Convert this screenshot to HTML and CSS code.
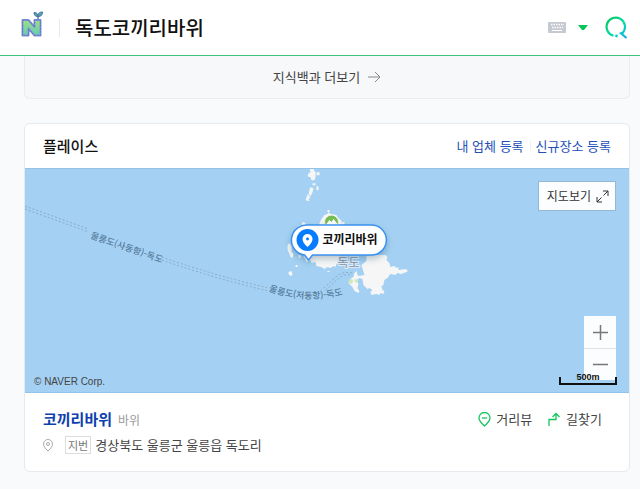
FILE: index.html
```html
<!DOCTYPE html>
<html lang="ko">
<head>
  <meta charset="UTF-8">
  <meta name="viewport" content="width=device-width, initial-scale=1.0">
  <title>독도코끼리바위 : 네이버 검색</title>
  <link rel="stylesheet" href="styles.css">
</head>
<body>
  <header class="search-header">
    <a class="logo" href="#" aria-label="NAVER">
      <svg width="24" height="28" viewBox="0 0 24 28">
        <defs>
          <linearGradient id="logo-fill" x1="0" y1="0" x2="0" y2="1">
            <stop offset="0" stop-color="#a0e07e"/>
            <stop offset="1" stop-color="#5fcdb8"/>
          </linearGradient>
        </defs>
        <path d="M2.500 10h6l6 7v-7h6v15.500h-6l-6-7v7h-6z" fill="url(#logo-fill)" stroke="#8497d6" stroke-width="2" stroke-linejoin="round"/>
        <path d="M2.500 10h6l6 7v-7h6v15.500h-6l-6-7v7h-6z" fill="none" stroke="#5f76bf" stroke-dasharray="2 1"/>
        <path d="M18 9V6" stroke="#7d9cc9" stroke-width="2"/>
        <path d="M18 6.500c-3 0-4-1.500-4-4 3 0 4 1.500 4 4zM18 6.500c0-3 1-4.500 4.500-4.500 0 3-1.500 4.500-4.500 4.500z" fill="#55a9a2" stroke="#4a6fb0"/>
      </svg>
    </a>
    <form class="search-form">
      <input class="search-input" type="text" value="독도코끼리바위" aria-label="검색어">
      <button class="icon-button" type="button" aria-label="한글 입력기">
        <svg width="18" height="11" viewBox="0 0 18 11">
          <rect width="18" height="11" rx="1" fill="#c5c9d0"/>
          <path d="M3 2.500h13M4 5.500h11" stroke="#fff" stroke-width="1.500" stroke-dasharray="1.500 1"/>
          <path d="M4 8.500h10" stroke="#fff"/>
        </svg>
      </button>
      <button class="icon-button" type="button" aria-label="자동완성">
        <svg width="10" height="6" viewBox="0 0 10 6"><path d="M0 0h10L6 5H4z" fill="#09c45b"/></svg>
      </button>
      <button class="icon-button" type="submit" aria-label="검색">
        <svg width="24" height="24" viewBox="0 0 24 24">
          <defs>
            <linearGradient id="search-stroke" x1="0" y1="0" x2="1" y2="1">
              <stop offset="0" stop-color="#04c65a"/>
              <stop offset=".55" stop-color="#05dda8"/>
              <stop offset="1" stop-color="#12a9f0"/>
            </linearGradient>
          </defs>
          <path d="M9.500 19.700A9.200 9.200 0 1 1 19 16.500L17 17.300L22.500 22" fill="none" stroke="url(#search-stroke)" stroke-width="2.200"/>
          <circle cx="12.500" cy="20" r="1.400" fill="#0ccbd0"/>
        </svg>
      </button>
    </form>
  </header>

  <main class="content">
    <section class="more-box">
      <a class="more-link" href="#">지식백과 더보기
        <svg width="13" height="12" viewBox="0 0 13 12"><path d="M0 6h12M7 1l5 5-5 5" fill="none" stroke="#888"/></svg>
      </a>
    </section>

    <section class="place">
      <div class="place-head">
        <h2>플레이스</h2>
        <nav class="place-links">
          <a href="#">내 업체 등록</a>
          <a href="#">신규장소 등록</a>
        </nav>
      </div>

      <div class="map">
        <svg class="map-canvas" viewBox="25 168 605 225" preserveAspectRatio="xMidYMid slice">
          <defs>
            <path id="route-west" d="M90 238L165 264"/>
            <path id="route-east" d="M269 291Q306 305 346 294"/>
            <filter id="bubble-shadow" x="-20%" y="-30%" width="140%" height="170%">
              <feDropShadow dx="0" dy="3" stdDeviation="3" flood-color="#24445f" flood-opacity=".3"/>
            </filter>
          </defs>
          <rect x="-1000" y="168" width="2600" height="225" fill="#a4d1f3"/>

          <!-- islets -->
          <g fill="#f5f6f5">
            <path d="M310 168h4l1 3 1 1v5l-1 3h-3l-1-3-3-1 1-3 2-1zM317 172h3v3h-3zM313 183h3v2h-3zM311 187l3 1-1 4-2 4-2-2 1-5zM317 186h2v4h-2zM308 194l3 3-2 2 1 2-4-1z"/>
            <path d="M322 219l3-4 3-1 1-2 2 2 6 1 1 2 4 4 1 3 2 2v4h-25v-7zM328 210h2v2h-2zM343 222h2v2h-2z"/>
            <path d="M296 229l3-3 3-1 1-3 3 1v3l-4 3-5 4-2-1zM288 245l2-2 2 3v6l2 2-1 4-2-1-2-5-1-2zM289 272l3-1 1 4-2 1-2-2z"/>
            <path d="M304 254h36v9l-3 1-1 3-2-1-3 2-3-1-3 2-3-2-5-1-1-4-4 1-1-3-4 2-2-4z"/>
            <path d="M362 265l5-4v-5l8-1h11l2 2-1 3 3 3 1 4 4-1 2 2 2-1v3l8-1v3l-5 2-4-1-2 2-5-1-3 4-3 2-1 5-2 1 1 4 2 1-1 3-3-1-1 2-3-1-5 1-1-3 2-2-3-2-2 1-4-4-1-6-3-1-3 2 2 4-1 4 2 3-1 2-4-2-2-4-4-4 2-4 3-2 1-4 2-2 1 4 1 1 6-1z"/>
            <path d="M404 270h4v2h-4zM296 265h2v2h-2zM328 271h2v1h-2zM299 255h2v3h-2z"/>
          </g>
          <path d="M349 281l3-2 2 2-2 3-3-1zM355 279l4 1-2 3-2-2z" fill="#cfe8b9"/>
          <circle cx="332" cy="222" r="7" fill="#77bb55" stroke="#edf4ea"/>
          <path d="M326 225l4-5 2 2 2-3 5 6z" fill="#fff"/>

          <!-- ferry routes -->
          <g class="ferry">
            <path d="M25 206L89 229M25 209L89 232M162 257Q220 277 269 288M162 260Q220 280 269 291"/>
            <path d="M324 288C334 281 338 270 353 273M326 290C336 283 340 273 351 275"/>
          </g>

          <text class="route-name"><textPath href="#route-west">울릉도(사동항)-독도</textPath></text>
          <text class="route-name"><textPath href="#route-east">울릉도(저동항)-독도</textPath></text>
          <text class="island-name" x="338" y="267">독도</text>

          <!-- selected place -->
          <a href="#">
            <path d="M309 225h63a15 15 0 0 1 0 30h-59l-4 5-4-5a15 15 0 0 1 4-30z" fill="#fff" stroke="#3c91ef" stroke-width="1.500" filter="url(#bubble-shadow)"/>
            <circle cx="308" cy="240" r="11" fill="#087cff"/>
            <path d="M308 247c-3-3-5-5-5-8a5 5 0 0 1 10 0c0 3-2 5-5 8z" fill="#fff"/>
            <circle cx="308" cy="239" r="1.500" fill="#087cff"/>
            <text class="bubble-name" x="323" y="244">코끼리바위</text>
          </a>
        </svg>

        <button class="map-open" type="button">지도보기
          <svg width="13" height="13" viewBox="0 0 13 13"><path d="M7 1h5v5M12 1L7.500 5.500M1 7v5h5M1 12l4.500-4.500" fill="none" stroke="#333"/></svg>
        </button>
        <div class="zoom">
          <button type="button" aria-label="확대"><svg width="15" height="15" viewBox="0 0 15 15"><path d="M0 7.500h15M7.500 0v15" stroke="#777" stroke-width="1.500"/></svg></button>
          <button type="button" aria-label="축소"><svg width="15" height="15" viewBox="0 0 15 15"><path d="M0 7.500h15" stroke="#777" stroke-width="1.500"/></svg></button>
        </div>
        <div class="scale">500m</div>
        <span class="copyright">© NAVER Corp.</span>
      </div>

      <div class="place-info">
        <div>
          <h3 class="place-title"><a href="#">코끼리바위</a><span>바위</span></h3>
          <p class="address">
            <svg width="10" height="13" viewBox="0 0 10 13" fill="none" stroke="#aaa"><path d="M5 12C2 9 .5 7.500.5 5a4.500 4.500 0 0 1 9 0c0 2.500-1.500 4-4.500 7z"/><circle cx="5" cy="5" r="1.500"/></svg>
            <span class="tag">지번</span>
            <span>경상북도 울릉군 울릉읍 독도리</span>
          </p>
        </div>
        <div class="actions">
          <a href="#">
            <svg width="13" height="15" viewBox="0 0 13 15" fill="none" stroke="#15c55c" stroke-width="1.300"><path d="M6.500 14C3 11 1 8.700 1 6a5.500 5.500 0 0 1 11 0c0 2.700-2 5-5.500 8z"/><path d="M4 6h5"/></svg>
            거리뷰
          </a>
          <a href="#">
            <svg width="13" height="15" viewBox="0 0 13 15" fill="none" stroke="#15c55c" stroke-width="1.300"><path d="M1 14V7.500h7V2M4.500 5L8 1.500 11.500 5"/></svg>
            길찾기
          </a>
        </div>
      </div>
    </section>
  </main>
</body>
</html>
```

FILE: styles.css
```css
* {
  box-sizing: border-box;
}

body {
  margin: 0;
  background: #f9fafc;
  color: #444;
  font-family: "Noto Sans CJK KR", sans-serif;
  font-size: 13px;
  line-height: 20px;
}

a {
  color: inherit;
  text-decoration: none;
}

button {
  font: inherit;
  cursor: pointer;
}

svg {
  display: block;
  flex: none;
}

/* Header */
.search-header {
  display: flex;
  align-items: center;
  height: 56px;
  padding: 0 12px 0 20px;
  background: #fff;
  border-bottom: 1px solid #3ac47d;
}

.logo {
  padding-bottom: 8px;
}

.search-form {
  display: flex;
  flex: 1;
  align-items: center;
  gap: 12px;
  min-width: 0;
  margin-left: 15px;
}

.search-input {
  flex: 1;
  min-width: 0;
  height: 18px;
  padding: 0 0 0 15px;
  border: 0;
  border-left: 1px solid #e6e8eb;
  outline: 0;
  background: transparent;
  color: #111;
  font-family: inherit;
  font-size: 20px;
  font-weight: 500;
}

.icon-button {
  padding: 0;
  border: 0;
  background: none;
}

.icon-button:last-child {
  margin-left: 4px;
}

/* Content */
.content {
  padding: 0 10px 16px 24px;
}

.more-box {
  display: flex;
  justify-content: center;
  padding: 11px 0;
  background: #f7f8fa;
  border: 1px solid #e9ebee;
  border-top: 0;
  border-radius: 0 0 6px 6px;
}

.more-link {
  display: flex;
  align-items: center;
  gap: 8px;
}

.place {
  margin-top: 24px;
  overflow: hidden;
  background: #fff;
  border: 1px solid #e6e9ed;
  border-radius: 6px;
}

.place-head {
  display: flex;
  align-items: center;
  justify-content: space-between;
  padding: 12px 18px;
}

.place-head h2 {
  margin: 0;
  color: #111;
  font-size: 15px;
  font-weight: 500;
}

.place-links {
  display: flex;
  align-items: center;
  color: #2350b8;
}

.place-links a + a {
  margin-left: 6px;
  padding-left: 6px;
  background: linear-gradient(#eee, #eee) left center / 1px 10px no-repeat;
}

/* Map */
.map {
  position: relative;
  height: 225px;
  border-top: 1px solid #93c3e8;
  border-bottom: 1px solid #93c3e8;
}

.map-canvas {
  width: 100%;
  height: 100%;
}

.ferry {
  fill: none;
  stroke: #86aacb;
  stroke-dasharray: 2 2;
}

.route-name {
  fill: #54799a;
  font-size: 9px;
  font-weight: 500;
}

.island-name {
  fill: #7d92ae;
  stroke: #e4edf4;
  stroke-width: 2px;
  paint-order: stroke;
  font-size: 12px;
}

.bubble-name {
  fill: #111;
  font-size: 12px;
  font-weight: 700;
}

.map-open {
  position: absolute;
  top: 12px;
  right: 13px;
  display: flex;
  align-items: center;
  gap: 5px;
  height: 30px;
  padding: 0 6px 0 8px;
  border: 1px solid #91bad8;
  background: #fbfdfe;
  color: #333;
  font-size: 12px;
}

.zoom {
  position: absolute;
  right: 13px;
  bottom: 12px;
  background: #fbfdfe;
}

.zoom button {
  display: flex;
  align-items: center;
  justify-content: center;
  width: 32px;
  height: 32px;
  padding: 0;
  border: 0;
  background: none;
}

.zoom button + button {
  border-top: 1px solid #dde3e7;
}

.scale {
  position: absolute;
  right: 12px;
  bottom: 7px;
  display: flex;
  align-items: flex-end;
  justify-content: center;
  width: 58px;
  height: 8px;
  padding-bottom: 1px;
  border: 2px solid #111;
  border-top: 0;
  color: #111;
  font: bold 9px/9px "Liberation Sans", sans-serif;
}

.copyright {
  position: absolute;
  bottom: 3px;
  left: 9px;
  font: 10px/14px "Liberation Sans", sans-serif;
}

/* Place info */
.place-info {
  display: flex;
  align-items: flex-start;
  justify-content: space-between;
  padding: 16px 27px 16px 18px;
}

.place-title {
  margin: 0 0 5px;
  color: #0d3fae;
  font-size: 15px;
  font-weight: 700;
}

.place-title span {
  margin-left: 6px;
  color: #999;
  font-size: 12px;
  font-weight: 400;
}

.address {
  display: flex;
  align-items: center;
  margin: 0;
}

.tag {
  margin: 0 4px 0 12px;
  padding: 0 2px;
  border: 1px solid #ddd;
  color: #777;
  font-size: 11px;
  line-height: 16px;
}

.actions {
  display: flex;
  gap: 16px;
  font-size: 13px;
}

.actions a {
  display: flex;
  align-items: center;
  gap: 5px;
}
```
